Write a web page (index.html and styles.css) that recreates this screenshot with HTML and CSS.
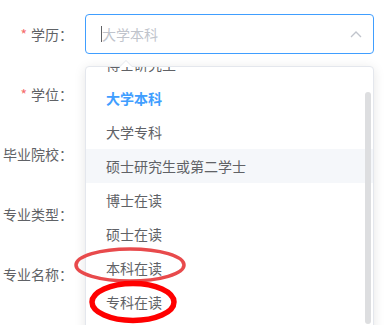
FILE: index.html
```html
<!DOCTYPE html>
<html lang="zh-CN">
<head>
  <meta charset="UTF-8">
  <title>学历信息</title>
  <link rel="stylesheet" href="styles.css">
</head>
<body>

<form class="edu-form">
  <div class="form-item">
    <label class="form-label"><span class="req">*</span>学历：</label>
    <div class="select is-focus">
      <div class="select-input">
        <span class="caret"></span><span class="placeholder">大学本科</span>
        <svg class="arrow" width="12" height="7" viewBox="0 0 12 7"><path d="M1 6 L6 1 L11 6" fill="none" stroke="#c0c4cc" stroke-width="1.3"/></svg>
      </div>
    </div>
  </div>
  <div class="form-item">
    <label class="form-label"><span class="req">*</span>学位：</label>
    <div class="select"><div class="select-input"></div></div>
  </div>
  <div class="form-item">
    <label class="form-label">毕业院校：</label>
    <div class="select"><div class="select-input"></div></div>
  </div>
  <div class="form-item">
    <label class="form-label">专业类型：</label>
    <div class="select"><div class="select-input"></div></div>
  </div>
  <div class="form-item">
    <label class="form-label">专业名称：</label>
    <div class="select"><div class="select-input"></div></div>
  </div>

  <!-- dropdown popper for 学历 -->
  <div class="dropdown">
    <div class="popper-arrow"></div>
    <div class="dropdown-wrap">
      <ul class="dropdown-list">
        <li>博士研究生</li>
        <li class="selected">大学本科</li>
        <li>大学专科</li>
        <li class="hover">硕士研究生或第二学士</li>
        <li>博士在读</li>
        <li>硕士在读</li>
        <li>本科在读</li>
        <li>专科在读</li>
      </ul>
    </div>
    <div class="scroll-thumb"></div>
  </div>

  <svg class="marks" width="384" height="325" viewBox="0 0 384 325">
    <ellipse cx="130" cy="265" rx="54" ry="16" fill="none" stroke="#e84a4c" stroke-width="3.5"/>
    <ellipse cx="133" cy="302" rx="41" ry="18.5" fill="none" stroke="#ff0000" stroke-width="5.5"/>
  </svg>
</form>

</body>
</html>
```

FILE: styles.css
```css
body {
  margin: 0;
  padding: 0;
  background: #ffffff;
  font-family: "Noto Sans CJK SC", "Microsoft YaHei", sans-serif;
  font-size: 14px;
  color: #606266;
  overflow: hidden;
}
.edu-form {
  position: relative;
  padding-top: 14px;
  width: 384px;
  height: 325px;
}
.form-item {
  display: flex;
  align-items: center;
  height: 40px;
  margin-bottom: 20px;
}
.form-label {
  width: 73px;
  margin-right: 12px;
  text-align: right;
  white-space: nowrap;
  line-height: 40px;
  color: #606266;
}
.req {
  color: #f56c6c;
  margin-right: 4px;
}
.select {
  width: 289px;
  height: 40px;
}
.select-input {
  position: relative;
  box-sizing: border-box;
  height: 40px;
  border: 1px solid #dcdfe6;
  border-radius: 4px;
  padding-left: 15px;
  display: flex;
  align-items: center;
}
.is-focus .select-input {
  border-color: #409eff;
}
.placeholder {
  color: #c0c4cc;
}
.caret {
  display: inline-block;
  width: 1px;
  height: 16px;
  background: #606266;
}
.arrow {
  position: absolute;
  right: 11px;
  top: 16px;
}
.dropdown {
  position: absolute;
  left: 85px;
  top: 66px;
  width: 289px;
  height: 274px;
  box-sizing: border-box;
  border: 1px solid #e4e7ed;
  border-radius: 4px;
  background: #ffffff;
  box-shadow: 0 2px 12px rgba(0, 0, 0, 0.1);
}
.popper-arrow {
  position: absolute;
  left: 34px;
  top: -7px;
  width: 0;
  height: 0;
  border-left: 6px solid transparent;
  border-right: 6px solid transparent;
  border-bottom: 6px solid #e4e7ed;
}
.popper-arrow::after {
  content: "";
  position: absolute;
  left: -6px;
  top: 1px;
  border-left: 6px solid transparent;
  border-right: 6px solid transparent;
  border-bottom: 6px solid #ffffff;
}
.dropdown-wrap {
  height: 100%;
  overflow: hidden;
}
.dropdown-list {
  list-style: none;
  margin: -20px 0 0;
  padding: 0;
}
.dropdown-list li {
  height: 34px;
  line-height: 34px;
  padding: 0 20px;
  color: #606266;
  white-space: nowrap;
}
.dropdown-list li.selected {
  color: #409eff;
  font-weight: 700;
}
.dropdown-list li.hover {
  background: #f5f7fa;
}
.scroll-thumb {
  position: absolute;
  right: 2px;
  top: 25px;
  width: 6px;
  height: 232px;
  border-radius: 3px;
  background: #dddee0;
}
.marks {
  position: absolute;
  left: 0;
  top: 0;
  pointer-events: none;
}
```
